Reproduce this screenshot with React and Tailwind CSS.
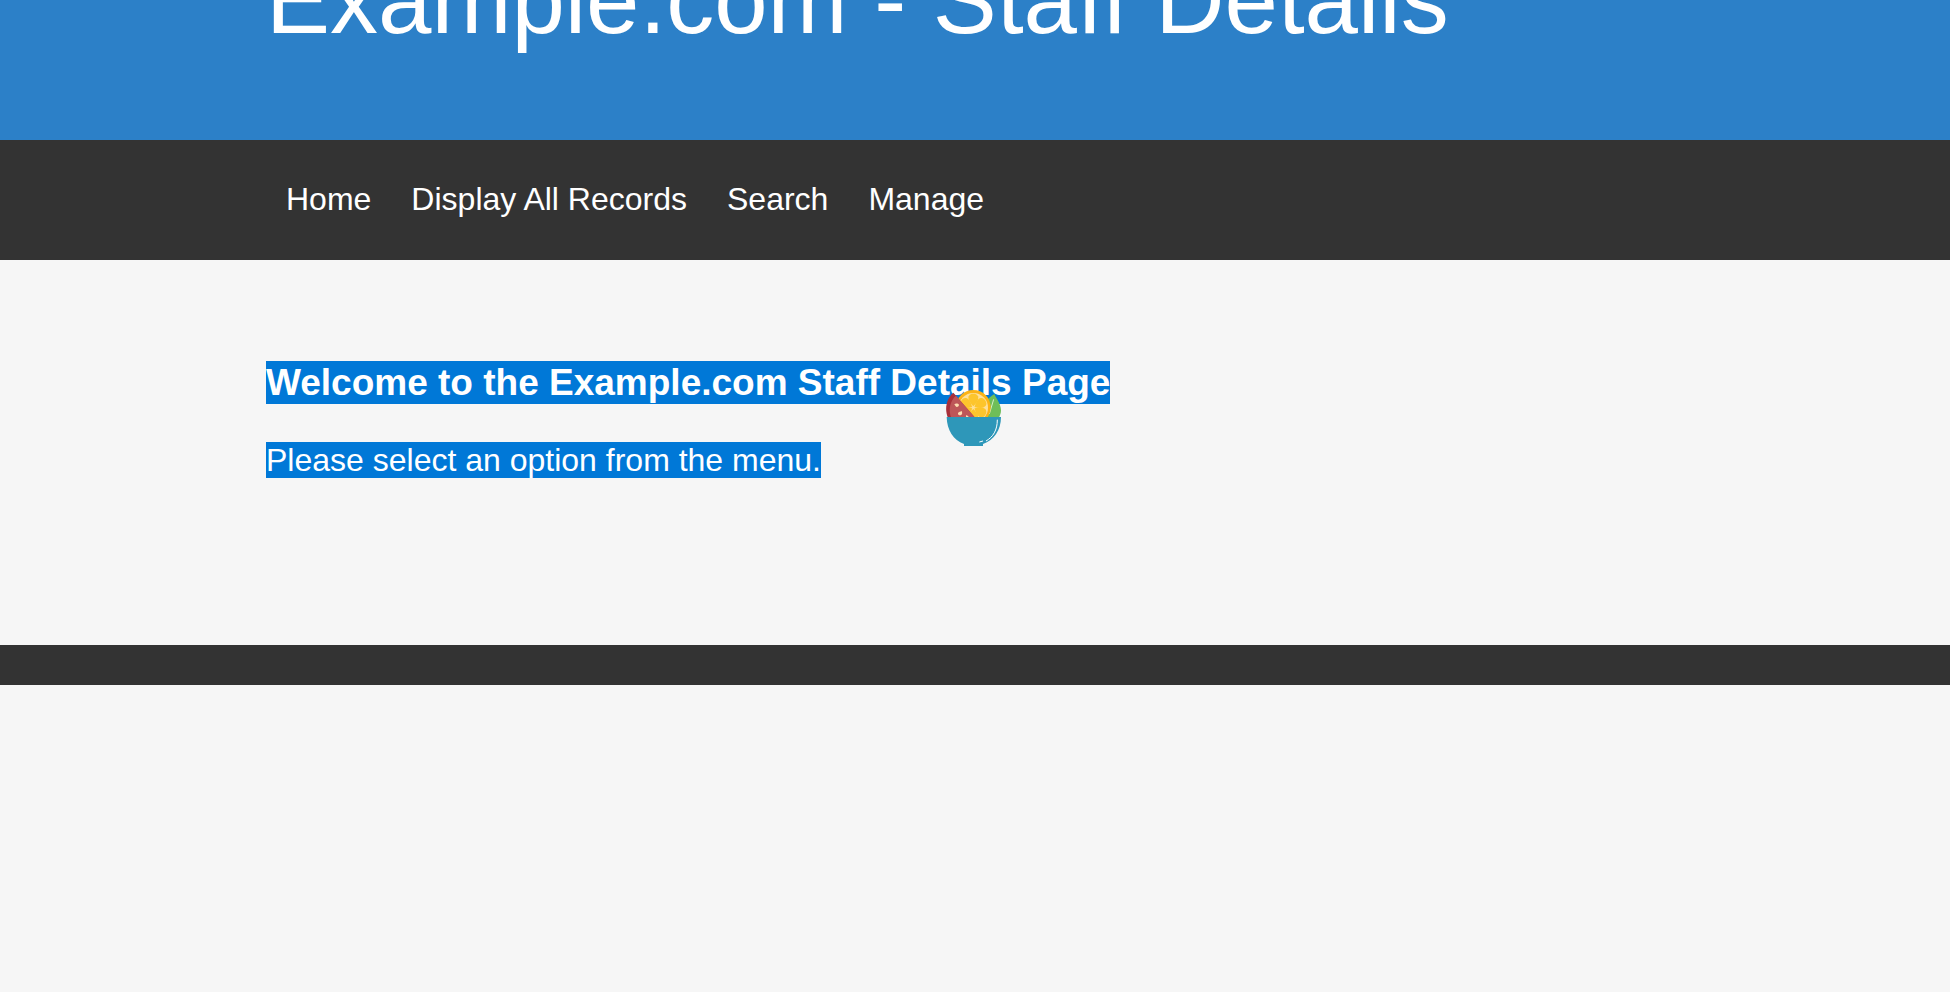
const links = ["Home", "Display All Records", "Search", "Manage"];

const petalAngles = [0, 60, 120, 180, 240, 300];

function FruitBowl() {
  return (
    <svg
      viewBox="48 30 174 168"
      width="58"
      height="56"
      aria-hidden="true"
      className="pointer-events-none absolute top-[130px] left-1/2 -translate-x-1/2"
    >
      <path d="M168 114V64C175 55 184 47 193 42C197 54 213 70 213 91C213 100 210 107 206 114Z" fill="#6fbe58" />
      <path d="M178 102L191 58" stroke="#d5efcb" strokeWidth="3" fill="none" />
      <circle cx="130" cy="82" r="52" fill="#fcb316" />
      <circle cx="130" cy="83" r="44" fill="#fee09a" />
      <g fill="#fdc52c">
        {petalAngles.map((angle) => (
          <path
            key={angle}
            d="M130 79C119 68 113 58 116 49C119 42 125 41 130 41C135 41 141 42 144 49C147 58 141 68 130 79Z"
            transform={`rotate(${angle} 130 83)`}
          />
        ))}
      </g>
      <path d="M70 38C50 54 42 86 54 114H136Z" fill="#a8303a" />
      <path d="M78 47C60 62 54 90 64 114H136Z" fill="#bd5658" />
      <g fill="#fddcb0">
        <path d="M73 73C78 69 86 71 87 75C86 80 80 83 77 79Z" />
        <path d="M95 93C97 98 98 104 92 106C86 106 83 103 84 99C87 96 91 95 95 93Z" />
        <path d="M108 106C113 107 117 110 117 114H108Z" />
      </g>
      <path d="M50 111H213C213 150 192 181 159 192V198H102V192C70 181 51 150 50 111Z" fill="#2e97b9" />
      <path d="M202 119C202 151 189 171 168 183" stroke="#fff" strokeWidth="3" fill="none" />
      <path d="M148 186L159 183" stroke="#fff" strokeWidth="3" fill="none" />
    </svg>
  );
}

export default function App() {
  return (
    <div className="min-h-screen bg-[#f6f6f6] font-['Liberation_Sans',Arial,sans-serif] text-[32px] leading-[36px] text-white">
      <header className="flex h-[140px] items-end bg-[#2c80c8] pb-[92px]">
        <div className="mx-auto w-full max-w-[1418px]">
          <h1 className="text-[96px] leading-[96px]">Example.com - Staff Details</h1>
        </div>
      </header>
      <nav className="bg-[#333333] pt-[41px] pb-[43px]">
        <ul className="mx-auto flex w-full max-w-[1418px]">
          {links.map((label) => (
            <li key={label} className="px-5">
              <a href="#">{label}</a>
            </li>
          ))}
        </ul>
      </nav>
      <main className="relative pt-[101px] pb-[167px]">
        <div className="mx-auto flex w-full max-w-[1418px] flex-col items-start gap-[38px]">
          <h3 className="bg-[#0078d7] text-[37px] leading-[43px] font-bold">
            Welcome to the Example.com Staff Details Page
          </h3>
          <p className="bg-[#0078d7]">Please select an option from the menu.</p>
        </div>
        <FruitBowl />
      </main>
      <footer className="h-10 bg-[#333333]" />
    </div>
  );
}
